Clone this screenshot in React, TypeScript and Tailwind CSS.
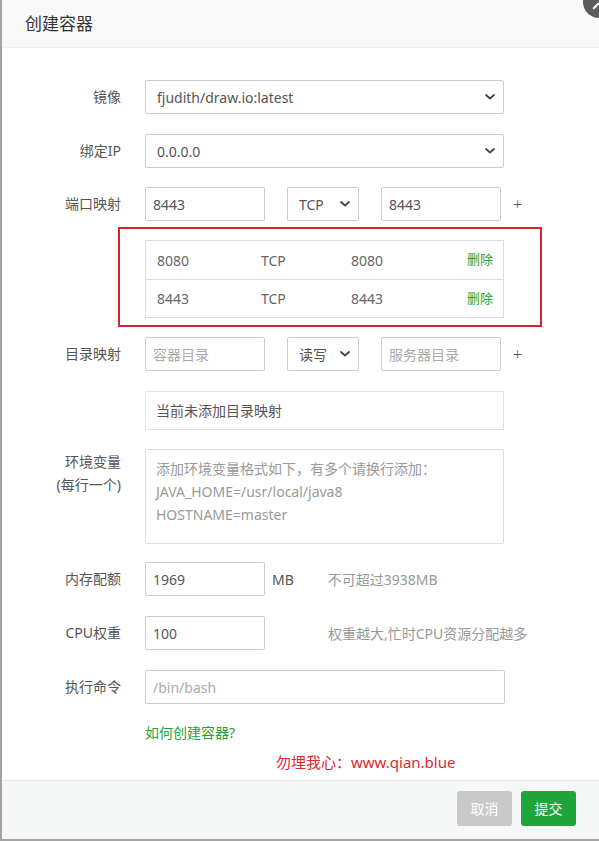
import type { ReactNode } from "react";

const font = { fontFamily: '"Noto Sans", "Noto Sans CJK SC", sans-serif' };

function Chevron() {
  return (
    <svg width="10" height="6" viewBox="0 0 10 6" className="shrink-0">
      <path d="M1 1l4 3.5L9 1" fill="none" stroke="#444" strokeWidth="1.8" strokeLinecap="round" strokeLinejoin="round" />
    </svg>
  );
}

function Row({ label, children, className = "" }: { label: ReactNode; children: ReactNode; className?: string }) {
  return (
    <div className={`flex ${className}`}>
      <div className="w-[119px] shrink-0 text-right leading-[34px] text-[#555]">{label}</div>
      <div className="ml-[24px] flex items-center">{children}</div>
    </div>
  );
}

function Select({ value, width }: { value: string; width: string }) {
  return (
    <div className={`flex h-[34px] items-center justify-between rounded-[2px] border border-[#ccc] pl-[11px] pr-[8px] text-[#555] ${width}`}>
      <span>{value}</span>
      <Chevron />
    </div>
  );
}

function Input({ value, placeholder, width }: { value?: string; placeholder?: string; width: string }) {
  return (
    <div className={`flex h-[34px] items-center rounded-[2px] border border-[#ccc] pl-[7px] ${width}`}>
      {value ? <span className="text-[#555]">{value}</span> : <span className="text-[#aaa]">{placeholder}</span>}
    </div>
  );
}

const ports = [
  { host: "8080", proto: "TCP", container: "8080" },
  { host: "8443", proto: "TCP", container: "8443" },
];

export default function App() {
  return (
    <div
      style={font}
      className="relative flex h-[841px] w-[599px] flex-col overflow-hidden border-b-2 border-l-2 border-[#a3a3a3] bg-white text-[14px]"
    >
      {/* close button, mostly off-screen */}
      <div className="absolute left-[581px] top-[-14px] flex h-[32px] w-[32px] items-center justify-center rounded-full bg-[#5c5c5c]">
        <span className="mt-[8px] ml-[-6px] block h-[2px] w-[8px] rotate-[-45deg] bg-white" />
      </div>

      <div className="flex h-[48px] shrink-0 items-center border-b border-[#eee] bg-[#f8f8f8] pl-[23px] text-[17px] text-[#333]">
        创建容器
      </div>

      <div className="pt-[32px]">
        <Row label="镜像">
          <Select value="fjudith/draw.io:latest" width="w-[359px]" />
        </Row>
        <Row label="绑定IP" className="mt-[20px]">
          <Select value="0.0.0.0" width="w-[359px]" />
        </Row>
        <Row label="端口映射" className="mt-[19px]">
          <Input value="8443" width="w-[120px]" />
          <div className="ml-[22px]">
            <Select value="TCP" width="w-[72px]" />
          </div>
          <div className="ml-[22px]">
            <Input value="8443" width="w-[120px]" />
          </div>
          <span className="ml-[12px] text-[16px] font-light text-[#555]">+</span>
        </Row>

        <div className="ml-[116px] mt-[6px] h-[100px] w-[424px] border-2 border-[#d3272d] pl-[25px] pt-[11px]">
          <div className="w-[359px] border border-[#ddd]">
            {ports.map((p, i) => (
              <div key={i} className={`flex h-[38px] items-center pl-[11px] pr-[10px] text-[#666] ${i ? "border-t border-[#ddd]" : ""}`}>
                <span className="w-[104px]">{p.host}</span>
                <span className="w-[90px]">{p.proto}</span>
                <span className="flex-1">{p.container}</span>
                <span className="text-[13px] text-[#20a53a]">删除</span>
              </div>
            ))}
          </div>
        </div>

        <Row label="目录映射" className="mt-[10px]">
          <Input placeholder="容器目录" width="w-[120px]" />
          <div className="ml-[22px]">
            <Select value="读写" width="w-[72px]" />
          </div>
          <div className="ml-[22px]">
            <Input placeholder="服务器目录" width="w-[120px]" />
          </div>
          <span className="ml-[12px] text-[16px] font-light text-[#555]">+</span>
        </Row>

        <div className="ml-[143px] mt-[20px] flex h-[39px] w-[359px] items-center border border-[#e2e2e2] pl-[10px] text-[#555]">
          当前未添加目录映射
        </div>

        <div className="mt-[19px] flex">
          <div className="w-[119px] shrink-0 pt-[1px] text-right leading-[23px] text-[#555]">
            环境变量
            <br />
            (每行一个)
          </div>
          <div className="ml-[24px] h-[95px] w-[359px] rounded-[2px] border border-[#ddd] px-[10px] pt-[7px] leading-[23px] text-[#999]">
            添加环境变量格式如下，有多个请换行添加：
            <br />
            JAVA_HOME=/usr/local/java8
            <br />
            HOSTNAME=master
          </div>
        </div>

        <Row label="内存配额" className="mt-[18px]">
          <Input value="1969" width="w-[120px]" />
          <span className="ml-[7px] text-[#555]">MB</span>
          <span className="ml-[34px] text-[#999]">不可超过3938MB</span>
        </Row>
        <Row label="CPU权重" className="mt-[20px]">
          <Input value="100" width="w-[120px]" />
          <span className="ml-[63px] text-[#999]">权重越大,忙时CPU资源分配越多</span>
        </Row>
        <Row label="执行命令" className="mt-[20px]">
          <Input placeholder="/bin/bash" width="w-[360px]" />
        </Row>

        <div className="ml-[143px] mt-[19px] leading-[20px] text-[#20a53a]">如何创建容器?</div>
        <div className="ml-[274px] mt-[8px] text-[15px] leading-[22px] text-[#e0282e]">勿埋我心：www.qian.blue</div>
      </div>

      <div className="mt-auto flex h-[59px] shrink-0 items-start justify-end gap-[9px] border-t border-[#e8e8e8] bg-[#f6f8f8] pr-[23px] pt-[10px]">
        <button className="h-[35px] w-[55px] rounded-[3px] bg-[#c9c9c9] text-white">取消</button>
        <button className="h-[35px] w-[55px] rounded-[3px] bg-[#20a53a] text-white">提交</button>
      </div>
    </div>
  );
}
